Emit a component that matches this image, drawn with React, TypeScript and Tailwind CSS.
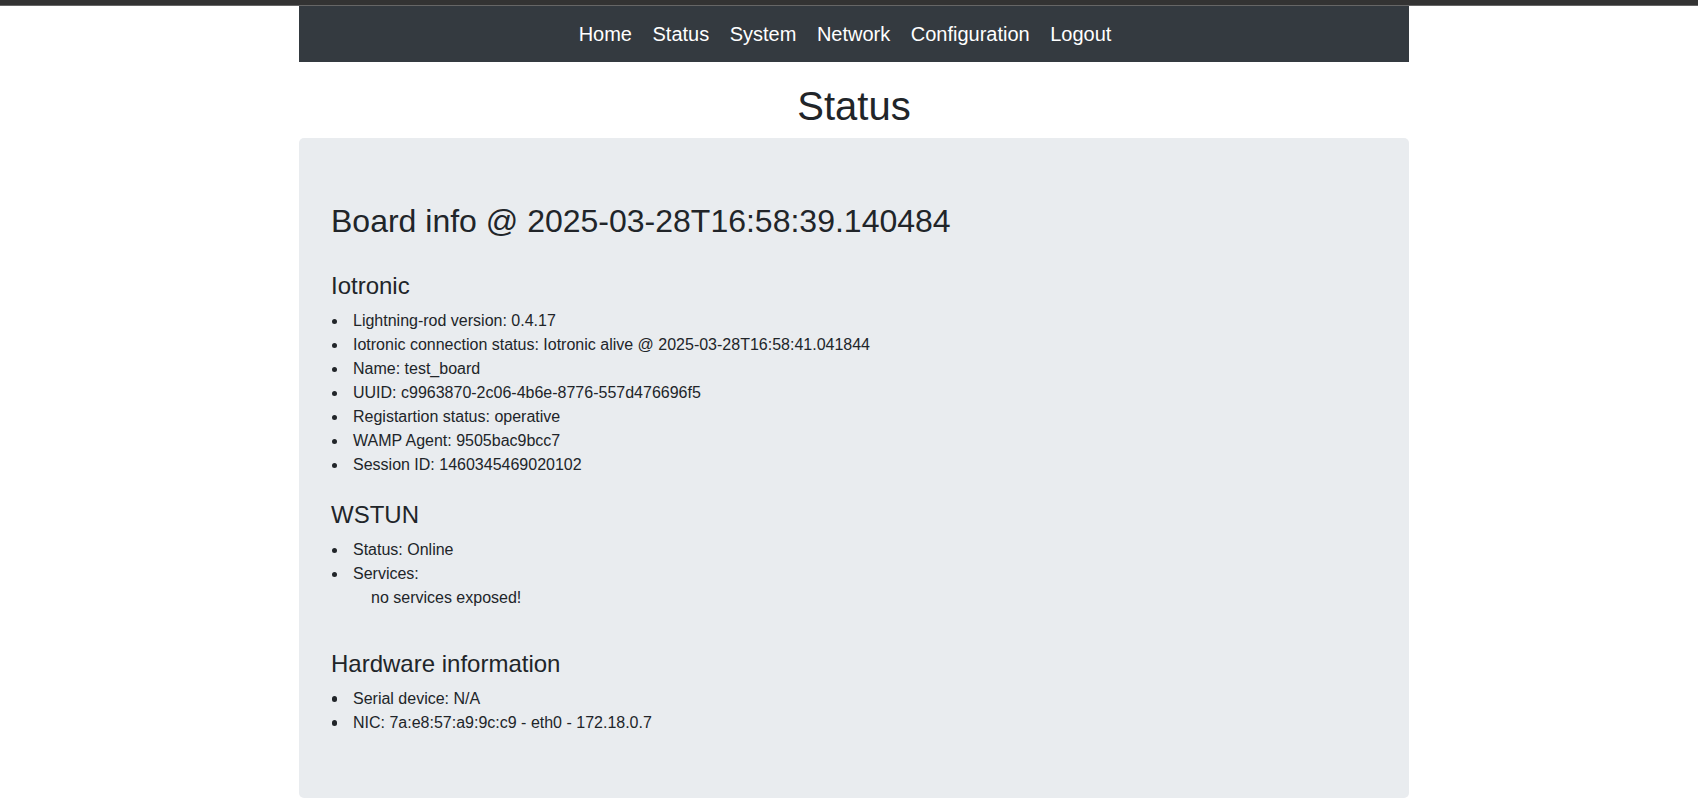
import React from "react";

const iotronic = [
  "Lightning-rod version: 0.4.17",
  "Iotronic connection status: Iotronic alive @ 2025-03-28T16:58:41.041844",
  "Name: test_board",
  "UUID: c9963870-2c06-4b6e-8776-557d476696f5",
  "Registartion status: operative",
  "WAMP Agent: 9505bac9bcc7",
  "Session ID: 1460345469020102",
];

const links = ["Home", "Status", "System", "Network", "Configuration", "Logout"];

function Item({ children }: { children: React.ReactNode }) {
  return (
    <li className="flex">
      <span className="w-[22px] shrink-0">
        <span className="block mt-[9.5px] ml-[0.5px] w-[5.5px] h-[5.5px] rounded-full bg-[#212529]" />
      </span>
      <div>{children}</div>
    </li>
  );
}

export default function App() {
  return (
    <div
      className="min-h-[802px] bg-white text-[#212529]"
      style={{ fontFamily: '"Liberation Sans", Arial, sans-serif' }}
    >
      <div className="h-[5px] bg-[#333333]" />
      <div className="h-[1px] bg-[#666666]" />
      <div className="ml-[299px] w-[1110px]">
        <nav className="h-[56px] bg-[#343a40] flex items-center justify-center pr-[18px]">
          <ul className="flex gap-[20.5px]">
            {links.map((l) => (
              <li key={l} className="text-[20px] leading-[24px] text-white">
                {l}
              </li>
            ))}
          </ul>
        </nav>
        <h1 className="mt-[20px] mb-[8px] text-center text-[40px] leading-[48px] font-normal">
          Status
        </h1>
        <div className="bg-[#e9ecef] rounded-[5px] pt-[64px] px-[32px] pb-[63px]">
          <h2 className="text-[32px] leading-[38.4px] font-normal mb-[32px]">
            Board info @ 2025-03-28T16:58:39.140484
          </h2>
          <h4 className="text-[24px] leading-[28.8px] font-normal mb-[8px]">Iotronic</h4>
          <ul className="text-[16px] leading-[24px] mb-[24px]">
            {iotronic.map((t) => (
              <Item key={t}>{t}</Item>
            ))}
          </ul>
          <h4 className="text-[24px] leading-[28.8px] font-normal mb-[8px]">WSTUN</h4>
          <ul className="text-[16px] leading-[24px] mb-[40px]">
            <Item>Status: Online</Item>
            <Item>
              Services:
              <div className="pl-[18px]">no services exposed!</div>
            </Item>
          </ul>
          <h4 className="text-[24px] leading-[28.8px] font-normal mb-[8px]">
            Hardware information
          </h4>
          <ul className="text-[16px] leading-[24px]">
            <Item>Serial device: N/A</Item>
            <Item>NIC: 7a:e8:57:a9:9c:c9 - eth0 - 172.18.0.7</Item>
          </ul>
        </div>
      </div>
    </div>
  );
}
